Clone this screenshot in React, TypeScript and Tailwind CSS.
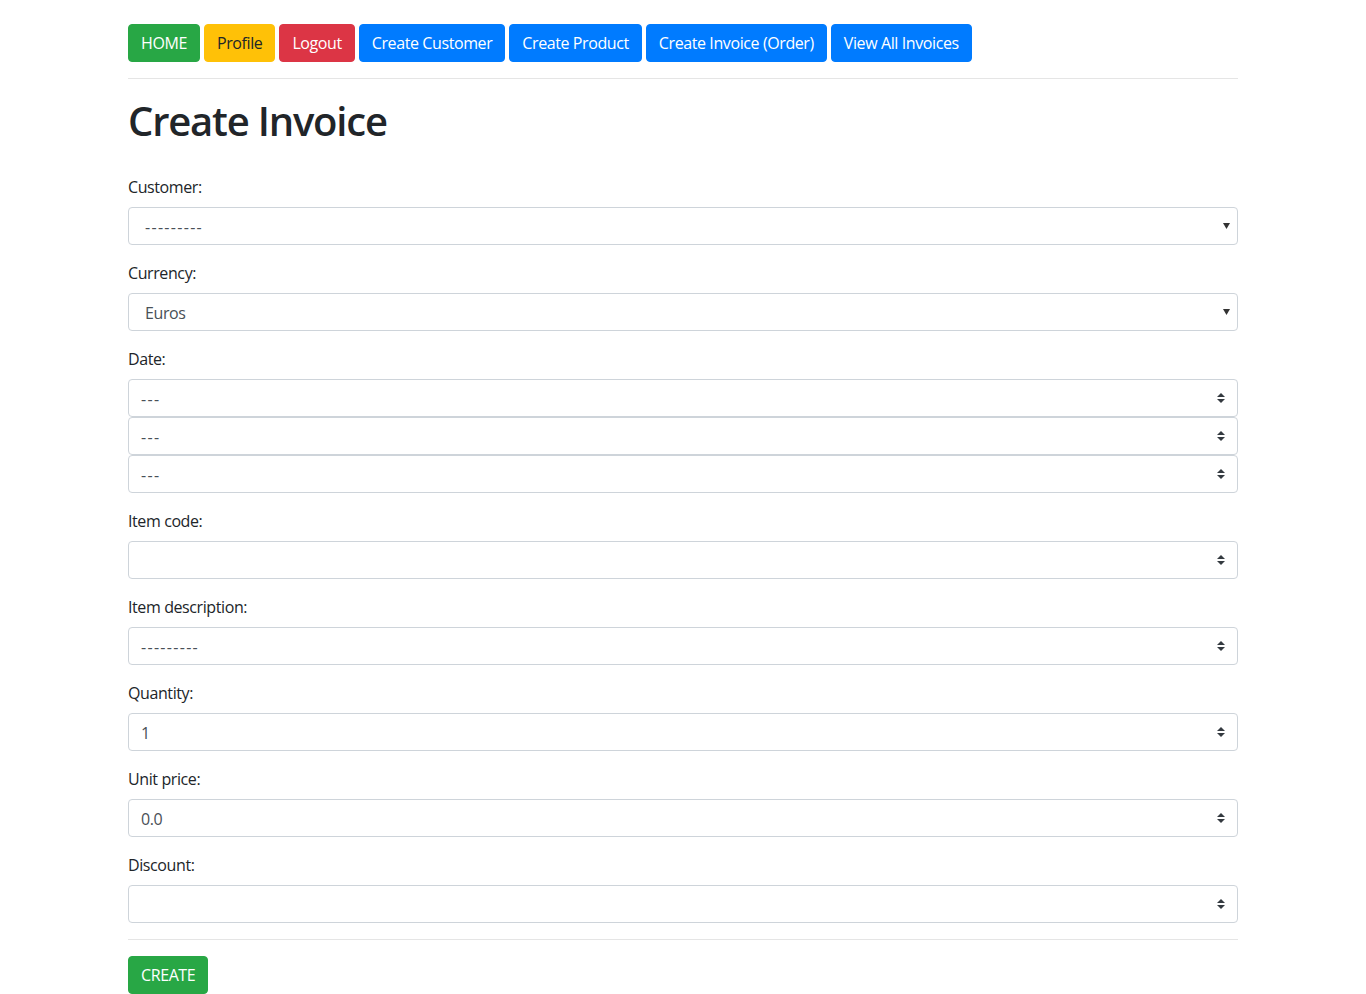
import React from "react";

const font = { fontFamily: '"Open Sans", "Noto Sans", sans-serif' };

function Val({ value }: { value: string }) {
  const dashes = /^-+$/.test(value);
  return <span className={dashes ? "tracking-[1.3px]" : "tracking-[-0.4px]"}>{value}</span>;
}

function NativeSelect({ value }: { value: string }) {
  return (
    <div className="relative flex h-[38px] w-full items-center rounded border border-[#ced4da] bg-white pl-4 pt-px text-base text-[#495057]">
      <Val value={value} />
      <svg className="absolute right-[7px] top-[15px]" width="7" height="6" viewBox="0 0 7 6">
        <path d="M0 0h7L3.5 6z" fill="#333" />
      </svg>
    </div>
  );
}

function CustomSelect({ value }: { value: string }) {
  return (
    <div className="relative flex h-[38px] w-full items-center rounded border border-[#ced4da] bg-white pl-3 pt-px text-base text-[#495057]">
      <Val value={value} />
      <svg className="absolute right-[12px] top-[13px]" width="8" height="10" viewBox="0 0 4 5">
        <path d="M2 0L0 2h4zm0 5L0 3h4z" fill="#343a40" />
      </svg>
    </div>
  );
}

function Group({ label, children, last = false }: { label: string; children: React.ReactNode; last?: boolean }) {
  return (
    <div className={last ? "" : "mb-4"}>
      <div className="mb-2 text-base leading-6 tracking-[-0.4px] text-[#212529]">{label}</div>
      {children}
    </div>
  );
}

const btn = "h-[38px] rounded border px-3 text-base tracking-[-0.4px]";

export default function App() {
  return (
    <div className="min-h-[994px] bg-white text-[#212529]" style={font}>
      <div className="mx-auto w-[1110px] pt-6">
        <div className="flex gap-1">
          <button className={btn + " border-[#28a745] bg-[#28a745] text-white"}>HOME</button>
          <button className={btn + " border-[#ffc107] bg-[#ffc107] text-[#212529]"}>Profile</button>
          <button className={btn + " border-[#dc3545] bg-[#dc3545] text-white"}>Logout</button>
          <button className={btn + " border-[#007bff] bg-[#007bff] text-white"}>Create Customer</button>
          <button className={btn + " border-[#007bff] bg-[#007bff] text-white"}>Create Product</button>
          <button className={btn + " border-[#007bff] bg-[#007bff] text-white"}>Create Invoice (Order)</button>
          <button className={btn + " border-[#007bff] bg-[#007bff] text-white"}>View All Invoices</button>
        </div>
        <div className="mt-4 border-t border-[rgba(0,0,0,0.1)]" />
        <h1 className="mt-4 pt-[3px] text-[40px] font-semibold leading-[45px] tracking-[-1.2px]">Create Invoice</h1>
        <div className="mt-8">
          <Group label="Customer:">
            <NativeSelect value="---------" />
          </Group>
          <Group label="Currency:">
            <NativeSelect value="Euros" />
          </Group>
          <Group label="Date:">
            <CustomSelect value="---" />
            <CustomSelect value="---" />
            <CustomSelect value="---" />
          </Group>
          <Group label="Item code:">
            <CustomSelect value="" />
          </Group>
          <Group label="Item description:">
            <CustomSelect value="---------" />
          </Group>
          <Group label="Quantity:">
            <CustomSelect value="1" />
          </Group>
          <Group label="Unit price:">
            <CustomSelect value="0.0" />
          </Group>
          <Group label="Discount:" last>
            <CustomSelect value="" />
          </Group>
        </div>
        <div className="mt-4 border-t border-[rgba(0,0,0,0.1)]" />
        <button className={"mt-4 " + btn + " border-[#28a745] bg-[#28a745] text-white"}>CREATE</button>
      </div>
    </div>
  );
}
